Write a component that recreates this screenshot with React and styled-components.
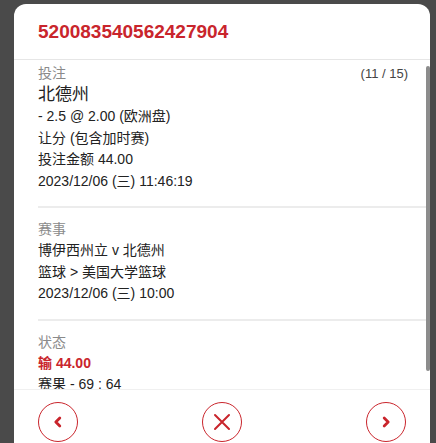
import React from 'react';
import styled, { createGlobalStyle } from 'styled-components';

const RED = '#c9252c';

const GlobalStyle = createGlobalStyle`
  html, body {
    margin: 0;
    height: 100%;
    overflow: hidden;
    background: #4a4a4a;
  }
  body {
    font-family: "Liberation Sans", Arial, "Noto Sans CJK SC", sans-serif;
  }
`;

////////////// STYLING
const Overlay = styled.div`
  padding: 4px 6px 0 14px;
`;

const Modal = styled.div`
  width: 416px;
  height: 470px;
  background: #fff;
  border-radius: 12px 12px 0 0;
  display: flex;
  flex-direction: column;
  overflow: hidden;
`;

const Header = styled.div`
  height: 56px;
  flex: none;
  display: flex;
  align-items: center;
  padding: 0 24px;
  border-bottom: 1px solid #e6e6e6;
  box-sizing: border-box;
  font-size: 19px;
  font-weight: bold;
  color: ${RED};
`;

const Body = styled.div`
  height: 329px;
  flex: none;
  display: flex;
`;

const Content = styled.div`
  flex: 1;
  overflow: hidden;
`;

// scrollbar drawn by hand, the headless browser hides native ones
const ScrollTrack = styled.div`
  width: 4px;
  flex: none;
  padding-top: 6px;
`;

const ScrollThumb = styled.div`
  height: 305px;
  background: #8c8c8c;
  border-radius: 2px;
`;

const Section = styled.div`
  margin-left: 24px;
  padding: ${p => (p.$first ? '3px' : '11px')} 18px 14px 0;
  border-bottom: ${p => (p.$last ? 'none' : '2px solid #ececec')};
  font-size: 14px;
  line-height: 21.4px;
  color: #222;
`;

const LabelRow = styled.div`
  display: flex;
  justify-content: space-between;
`;

const Label = styled.div`
  color: #8a8a8a;
`;

const Counter = styled.div`
  font-size: 13px;
  color: #444;
`;

const Title = styled.div`
  font-size: 17px;
  line-height: 22px;
`;

const Line = styled.div`
  color: ${p => (p.$loss ? RED : '#222')};
  font-weight: ${p => (p.$loss ? 'bold' : 'normal')};
`;

const Footer = styled.div`
  flex: 1;
  border-top: 1px solid #f0f0f0;
  padding: 12px 24px 0;
  display: flex;
  justify-content: space-between;
  align-items: flex-start;
`;

const RoundButton = styled.button`
  width: 40px;
  height: 40px;
  border-radius: 50%;
  border: 1px solid ${RED};
  background: #fff;
  padding: 0;
  display: flex;
  align-items: center;
  justify-content: center;
  cursor: pointer;
`;

const Chevron = ({ dir }) => (
  <svg width="14" height="14" viewBox="0 0 14 14">
    <path
      d={dir === 'left' ? 'M8.8 3 L4.8 7 L8.8 11' : 'M5.2 3 L9.2 7 L5.2 11'}
      fill="none"
      stroke={RED}
      strokeWidth="2.8"
      strokeLinecap="round"
      strokeLinejoin="round"
    />
  </svg>
);

const Cross = () => (
  <svg width="20" height="20" viewBox="0 0 20 20">
    <path d="M3 3 L17 17 M17 3 L3 17" stroke={RED} strokeWidth="2" strokeLinecap="round" />
  </svg>
);

/////////////////////////// COMPONENT DEFINITION /////////////////////////
export default function App() {
  return (
    <>
      <GlobalStyle />
      <Overlay>
        <Modal>
          <Header>520083540562427904</Header>

          <Body>
            <Content>
              {/* bet */}
              <Section $first>
                <LabelRow>
                  <Label>投注</Label>
                  <Counter>(11 / 15)</Counter>
                </LabelRow>
                <Title>北德州</Title>
                <Line>- 2.5 @ 2.00 (欧洲盘)</Line>
                <Line>让分 (包含加时赛)</Line>
                <Line>投注金额 44.00</Line>
                <Line>2023/12/06 (三) 11:46:19</Line>
              </Section>

              {/* event */}
              <Section>
                <Label>赛事</Label>
                <Line>博伊西州立 v 北德州</Line>
                <Line>篮球 &gt; 美国大学篮球</Line>
                <Line>2023/12/06 (三) 10:00</Line>
              </Section>

              {/* status */}
              <Section $last>
                <Label>状态</Label>
                <Line $loss>输 44.00</Line>
                <Line>赛果 - 69 : 64</Line>
              </Section>
            </Content>
            <ScrollTrack>
              <ScrollThumb />
            </ScrollTrack>
          </Body>

          <Footer>
            <RoundButton aria-label="previous"><Chevron dir="left" /></RoundButton>
            <RoundButton aria-label="close"><Cross /></RoundButton>
            <RoundButton aria-label="next"><Chevron dir="right" /></RoundButton>
          </Footer>
        </Modal>
      </Overlay>
    </>
  );
}
